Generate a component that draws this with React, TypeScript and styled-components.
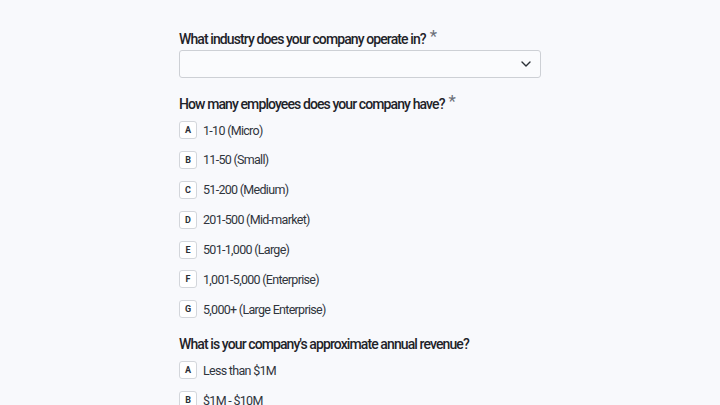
import styled, { createGlobalStyle } from "styled-components"

const GlobalStyle = createGlobalStyle`
  html, body {
    margin: 0;
    padding: 0;
    background: #f8f9fc;
    font-family: Roboto, "Noto Sans", "Liberation Sans", sans-serif;
    color: #1e2329;
  }
`

const Page = styled.div`
  width: 362px;
  margin: 0 auto 0 179px;
  padding-top: 28px;
`

const Question = styled.div`
  display: flex;
  flex-direction: column;
`

const Label = styled.div<{ $gap?: number }>`
  font-size: 14px;
  font-weight: 500;
  letter-spacing: -0.9px;
  line-height: 20px;
  color: #1e2329;
  margin-bottom: ${(p) => p.$gap ?? 3}px;
`

const Star = styled.span`
  color: #6b7078;
  font-size: 17px;
  font-weight: 400;
  letter-spacing: 0;
  position: relative;
  top: -2px;
  margin-left: 4px;
`

const Select = styled.div`
  height: 28px;
  box-sizing: border-box;
  border: 1px solid #cdd0d5;
  border-radius: 3px;
  background: #fafbfd;
  display: flex;
  align-items: center;
  justify-content: flex-end;
  padding-right: 8px;
  margin-bottom: 15px;
`

const Options = styled.div<{ $after?: number }>`
  display: flex;
  flex-direction: column;
  gap: 11.9px;
  margin-bottom: ${(p) => p.$after ?? 0}px;
`

const Option = styled.div`
  display: flex;
  align-items: center;
  gap: 6px;
  height: 18px;
`

const Key = styled.span`
  width: 18px;
  height: 18px;
  box-sizing: border-box;
  border: 1px solid #d3d6db;
  border-radius: 3px;
  background: #ffffff;
  display: flex;
  align-items: center;
  justify-content: center;
  font-size: 9px;
  font-weight: 700;
  color: #2a2f36;
`

const OptionText = styled.span`
  font-size: 12.5px;
  letter-spacing: -0.7px;
  color: #30353c;
`

function Chevron() {
  return (
    <svg width="12" height="12" viewBox="0 0 12 12" fill="none">
      <path d="M2 4l4 4 4-4" stroke="#2a2f36" strokeWidth="1.4" strokeLinecap="round" strokeLinejoin="round" />
    </svg>
  )
}

const employees = [
  "1-10 (Micro)",
  "11-50 (Small)",
  "51-200 (Medium)",
  "201-500 (Mid-market)",
  "501-1,000 (Large)",
  "1,001-5,000 (Enterprise)",
  "5,000+ (Large Enterprise)",
]

const revenue = ["Less than $1M", "$1M - $10M"]

const letters = "ABCDEFG"

export default function App() {
  return (
    <>
      <GlobalStyle />
      <Page>
        <Question>
          <Label $gap={1}>
            What industry does your company operate in?<Star>*</Star>
          </Label>
          <Select>
            <Chevron />
          </Select>
        </Question>
        <Question>
          <Label $gap={7}>
            How many employees does your company have?<Star>*</Star>
          </Label>
          <Options $after={16}>
            {employees.map((e, i) => (
              <Option key={e}>
                <Key>{letters[i]}</Key>
                <OptionText>{e}</OptionText>
              </Option>
            ))}
          </Options>
        </Question>
        <Question>
          <Label $gap={7}>What is your company's approximate annual revenue?</Label>
          <Options>
            {revenue.map((e, i) => (
              <Option key={e}>
                <Key>{letters[i]}</Key>
                <OptionText>{e}</OptionText>
              </Option>
            ))}
          </Options>
        </Question>
      </Page>
    </>
  )
}
